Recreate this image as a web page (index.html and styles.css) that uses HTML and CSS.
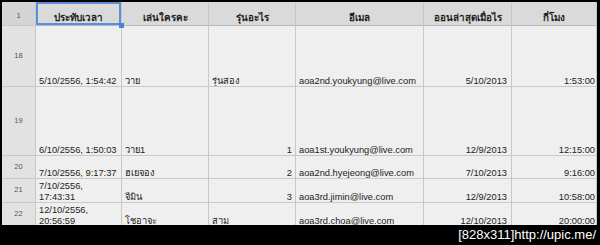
FILE: index.html
```html
<!DOCTYPE html>
<html>
<head>
<meta charset="utf-8">
<link rel="stylesheet" href="styles.css">
</head>
<body>
<div class="shot">
  <div class="sheet">
    <div class="rh corner">1</div>
    <div class="ch selected">ประทับเวลา<span class="handle"></span></div>
    <div class="ch">เล่นใครคะ</div>
    <div class="ch">รุ่นอะไร</div>
    <div class="ch">อีเมล</div>
    <div class="ch">ออนล่าสุดเมื่อไร</div>
    <div class="ch">กี่โมง</div>

    <div class="rh">18</div>
    <div class="c">5/10/2556, 1:54:42</div>
    <div class="c">วาย</div>
    <div class="c">รุ่นสอง</div>
    <div class="c">aoa2nd.youkyung@live.com</div>
    <div class="c r e">5/10/2013</div>
    <div class="c r f">1:53:00</div>

    <div class="rh">19</div>
    <div class="c">6/10/2556, 1:50:03</div>
    <div class="c">วาย1</div>
    <div class="c r">1</div>
    <div class="c">aoa1st.youkyung@live.com</div>
    <div class="c r e">12/9/2013</div>
    <div class="c r f">12:15:00</div>

    <div class="rh">20</div>
    <div class="c">7/10/2556, 9:17:37</div>
    <div class="c">ฮเยจอง</div>
    <div class="c r">2</div>
    <div class="c">aoa2nd.hyejeong@live.com</div>
    <div class="c r e">7/10/2013</div>
    <div class="c r f">9:16:00</div>

    <div class="rh">21</div>
    <div class="c">7/10/2556,<br>17:43:31</div>
    <div class="c">จีมิน</div>
    <div class="c r">3</div>
    <div class="c">aoa3rd.jimin@live.com</div>
    <div class="c r e">12/9/2013</div>
    <div class="c r f">10:58:00</div>

    <div class="rh">22</div>
    <div class="c">12/10/2556,<br>20:56:59</div>
    <div class="c">โชอาจะ</div>
    <div class="c">สาม</div>
    <div class="c">aoa3rd.choa@live.com</div>
    <div class="c r e">12/10/2013</div>
    <div class="c r f">20:00:00</div>
  </div>
  <div class="mark">[828x311]http://upic.me/</div>
</div>
</body>
</html>
```

FILE: styles.css
```css
html, body {
  margin: 0;
  padding: 0;
  background: #000;
}
.shot {
  width: 600px;
  height: 245px;
  overflow: hidden;
  background: #000;
  font-family: "Liberation Sans", Arial, sans-serif;
}
.sheet {
  margin: 2px 3px 0 2px;
  height: 223px;
  overflow: hidden;
  display: grid;
  grid-template-columns: 34px 86px 87px 87px 128px 88px 85px;
  grid-template-rows: 24px 61px 69px 23px 24px 24px;
  background: #efefef;
}
.sheet > div {
  box-sizing: border-box;
  border-right: 1px solid #c8c8c8;
  border-bottom: 1px solid #c8c8c8;
  color: #222;
  font-size: 9.3px;
  line-height: 10.5px;
  overflow: hidden;
}
.rh {
  background: #e2e2e2;
  display: flex;
  align-items: center;
  justify-content: center;
  font-size: 7.5px !important;
  color: #555 !important;
}
.corner {
  background: #d4d4d4;
  align-items: flex-start;
  padding-top: 9px;
}
.ch {
  background: #dadada;
  display: flex;
  align-items: flex-end;
  justify-content: center;
  font-weight: bold;
  font-size: 9.8px !important;
  padding-bottom: 2px;
  border-bottom-color: #b8b8b8 !important;
}
.selected {
  position: relative;
  overflow: visible !important;
  box-shadow: inset 0 0 0 2px #5b8fdb;
  z-index: 2;
}
.handle {
  position: absolute;
  right: -3px;
  bottom: -3px;
  width: 5px;
  height: 5px;
  background: #4a7fd4;
}
.c {
  display: flex;
  flex-direction: column;
  justify-content: flex-end;
  padding: 0 3px 0 3px;
  white-space: nowrap;
}
.c.r {
  align-items: flex-end;
}
.c.e {
  padding-right: 4px;
}
.c.f {
  padding-right: 1px;
}
.mark {
  height: 20px;
  box-sizing: border-box;
  padding-right: 4px;
  text-align: right;
  color: #fff;
  font-size: 13px;
  line-height: 20px;
  font-family: "Liberation Sans", Arial, sans-serif;
}
```
